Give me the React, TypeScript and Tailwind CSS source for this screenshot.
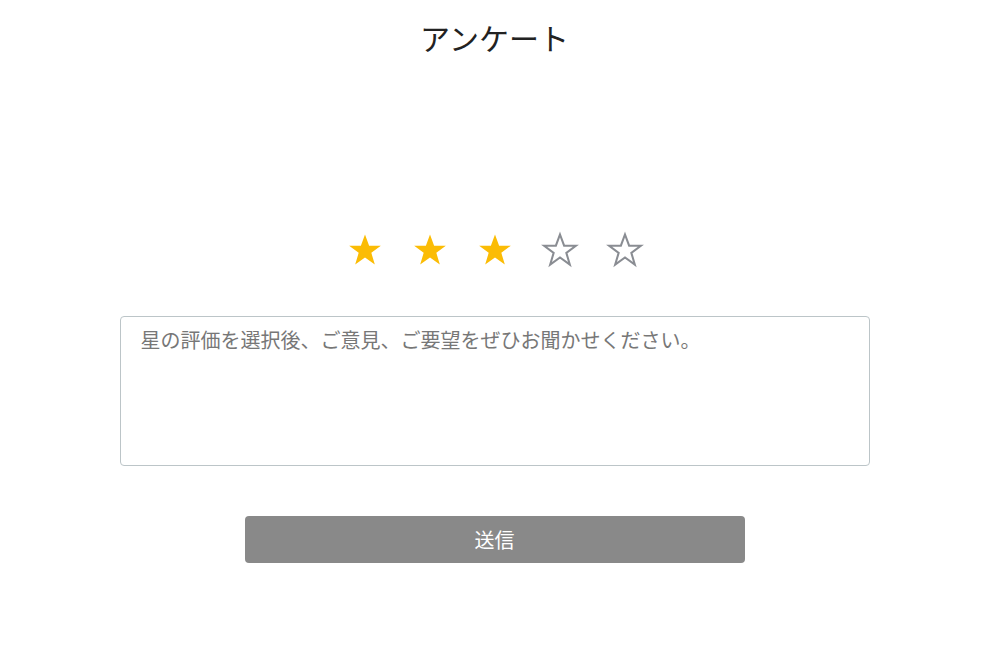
import React, { useState } from 'react';

const Star = ({ filled }: { filled: boolean }) => (
  <svg width="38" height="38" viewBox="0 0 24 24" aria-hidden="true">
    <polygon
      points="12,2.2 14.6,9.3 22,9.3 16,13.8 18.2,21.2 12,16.7 5.8,21.2 8,13.8 2,9.3 9.4,9.3"
      fill={filled ? '#fbbc05' : 'none'}
      stroke={filled ? 'none' : '#8a8d93'}
      strokeWidth="1.3"
      strokeLinejoin="miter"
    />
  </svg>
);

const App: React.FC = () => {
  const [rating, setRating] = useState(3);
  const [comment, setComment] = useState('');

  return (
    <div className="w-[981px] h-[662px] pl-[8px] bg-white flex flex-col items-center font-['Noto_Sans_CJK_JP','Noto_Sans',sans-serif]">
      <h1 className="mt-[17px] text-[30px] leading-[40px] text-[#222]">アンケート</h1>

      <div className="mt-[174px] flex gap-[27px]">
        {[1, 2, 3, 4, 5].map((n) => (
          <button key={n} onClick={() => setRating(n)} className="p-0">
            <Star filled={n <= rating} />
          </button>
        ))}
      </div>

      <textarea
        value={comment}
        onChange={(e) => setComment(e.target.value)}
        placeholder="星の評価を選択後、ご意見、ご要望をぜひお聞かせください。"
        className="mt-[47px] w-[750px] h-[150px] resize-none rounded border border-[#bcc5c8] px-5 py-[8px] text-[20px] leading-[30px] text-[#333] placeholder:text-[#777] focus:outline-none"
      />

      <button className="mt-[50px] w-[500px] h-[47px] rounded bg-[#898989] text-white text-[20px]">
        送信
      </button>
    </div>
  );
};

export default App;
